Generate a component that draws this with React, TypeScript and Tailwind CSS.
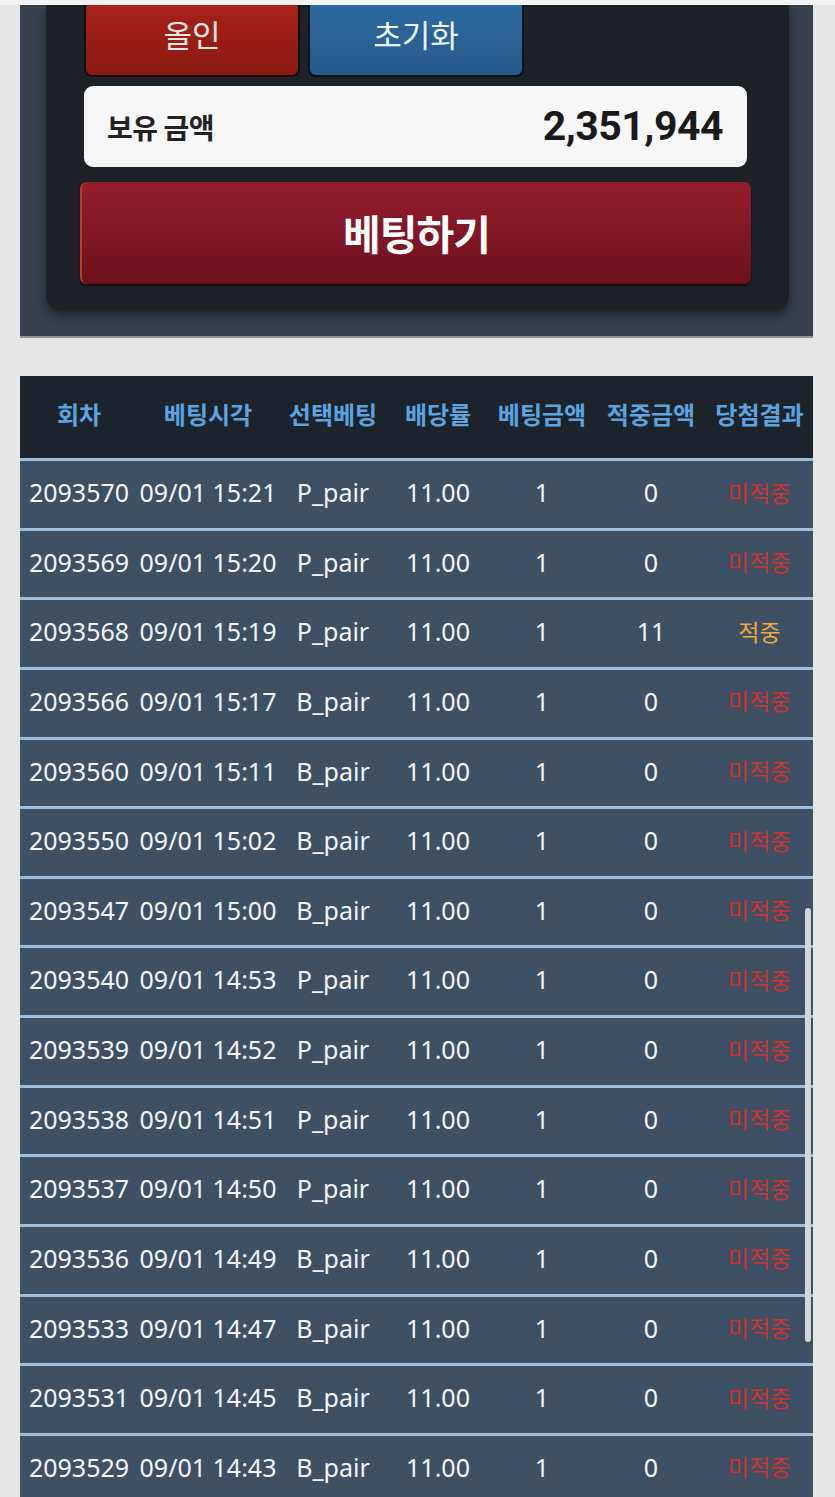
import React from "react";

type Row = {
  round: string;
  time: string;
  pick: string;
  odds: string;
  bet: string;
  win: string;
  hit: boolean;
};

const rows: Row[] = [
  { round: "2093570", time: "09/01 15:21", pick: "P_pair", odds: "11.00", bet: "1", win: "0", hit: false },
  { round: "2093569", time: "09/01 15:20", pick: "P_pair", odds: "11.00", bet: "1", win: "0", hit: false },
  { round: "2093568", time: "09/01 15:19", pick: "P_pair", odds: "11.00", bet: "1", win: "11", hit: true },
  { round: "2093566", time: "09/01 15:17", pick: "B_pair", odds: "11.00", bet: "1", win: "0", hit: false },
  { round: "2093560", time: "09/01 15:11", pick: "B_pair", odds: "11.00", bet: "1", win: "0", hit: false },
  { round: "2093550", time: "09/01 15:02", pick: "B_pair", odds: "11.00", bet: "1", win: "0", hit: false },
  { round: "2093547", time: "09/01 15:00", pick: "B_pair", odds: "11.00", bet: "1", win: "0", hit: false },
  { round: "2093540", time: "09/01 14:53", pick: "P_pair", odds: "11.00", bet: "1", win: "0", hit: false },
  { round: "2093539", time: "09/01 14:52", pick: "P_pair", odds: "11.00", bet: "1", win: "0", hit: false },
  { round: "2093538", time: "09/01 14:51", pick: "P_pair", odds: "11.00", bet: "1", win: "0", hit: false },
  { round: "2093537", time: "09/01 14:50", pick: "P_pair", odds: "11.00", bet: "1", win: "0", hit: false },
  { round: "2093536", time: "09/01 14:49", pick: "B_pair", odds: "11.00", bet: "1", win: "0", hit: false },
  { round: "2093533", time: "09/01 14:47", pick: "B_pair", odds: "11.00", bet: "1", win: "0", hit: false },
  { round: "2093531", time: "09/01 14:45", pick: "B_pair", odds: "11.00", bet: "1", win: "0", hit: false },
  { round: "2093529", time: "09/01 14:43", pick: "B_pair", odds: "11.00", bet: "1", win: "0", hit: false },
];

const headers = ["회차", "베팅시각", "선택베팅", "배당률", "베팅금액", "적중금액", "당첨결과"];

// column widths, summed to the 793px table
const cols = "grid grid-cols-[118px_140px_110px_100px_108px_110px_107px]";

const kr = "font-['Noto_Sans','Noto_Sans_CJK_KR',sans-serif]";

function BetPanel() {
  return (
    <div className="ml-[20px] w-[793px] bg-[#37414b] pl-[26px] pr-[24px] pb-[26px] border-b-2 border-[#8c949c]">
      <div className="bg-[#1e2227] rounded-b-[14px] shadow-[0_6px_10px_rgba(0,0,0,0.45)] pl-[38px] pr-[42px] pb-[26px]">
        <div className="flex gap-[8px]">
          <button className="w-[216px] h-[72px] rounded-b-[8px] border-2 border-t-0 border-[#0d0f12] bg-gradient-to-b from-[#a82218] to-[#8a1a12] text-[#f6e6e4] text-[31px] font-normal font-['Noto_Sans_CJK_KR',sans-serif] pb-[12px]">
            올인
          </button>
          <button className="w-[216px] h-[72px] rounded-b-[8px] border-2 border-t-0 border-[#0d0f12] bg-gradient-to-b from-[#2e6aa0] to-[#255a8c] text-[#eef3f8] text-[31px] font-normal font-['Noto_Sans_CJK_KR',sans-serif] pb-[12px]">
            초기화
          </button>
        </div>

        <div className="mt-[9px] h-[81px] rounded-[9px] bg-[#f7f7f8] flex items-center justify-between pl-[23px] pr-[24px] shadow-[0_0_0_1px_#18223a]">
          <span className="text-[28px] font-bold text-[#222] tracking-[-0.5px] font-['Noto_Sans_CJK_KR',sans-serif]">
            보유 금액
          </span>
          <span className="text-[41px] font-bold text-[#1a1a1a] font-['Roboto',sans-serif] tracking-[-0.5px]">
            2,351,944
          </span>
        </div>

        <button className="mt-[15px] -ml-[4px] w-[671px] h-[102px] rounded-[7px] border-l-2 border-[#c0392b] bg-gradient-to-b from-[#971d2d] to-[#6b111b] shadow-[0_2px_3px_rgba(0,0,0,0.6)] flex items-center justify-center">
          <span className="text-white text-[41px] font-bold tracking-[-1px] font-['Noto_Sans_CJK_KR',sans-serif]">
            베팅하기
          </span>
        </button>
      </div>
    </div>
  );
}

function HistoryTable() {
  return (
    <div className="ml-[20px] w-[793px] mt-[38px]">
      <div className={`${cols} h-[82px] bg-[#1c232a] items-center pb-[4px]`}>
        {headers.map((h) => (
          <div
            key={h}
            className={`text-center text-[24px] font-bold text-[#5ca4e0] ${kr}`}
          >
            {h}
          </div>
        ))}
      </div>
      {rows.map((r) => (
        <div
          key={r.round}
          className={`${cols} h-[69.64px] border-t-[3px] border-[#9dbfdd] bg-[#3e5064] items-center pb-[3px] text-[#f2f4f6] text-[25px] ${kr}`}
        >
          <div className="text-center">{r.round}</div>
          <div className="text-center">{r.time}</div>
          <div className="text-center">{r.pick}</div>
          <div className="text-center">{r.odds}</div>
          <div className="text-center">{r.bet}</div>
          <div className="text-center">{r.win}</div>
          <div
            className={`text-center text-[23px] ${
              r.hit ? "text-[#eeaa3a]" : "text-[#d3302c]"
            }`}
          >
            {r.hit ? "적중" : "미적중"}
          </div>
        </div>
      ))}
    </div>
  );
}

export default function App() {
  return (
    <div className="relative h-[1497px] overflow-hidden bg-[#e6e6e6] pt-[5px]">
      <div className="absolute top-0 left-0 right-0 h-[5px] bg-[#f3f3f3]" />
      <BetPanel />
      <HistoryTable />
      {/* overlay scrollbar */}
      <div className="absolute left-[805px] top-[908px] w-[6px] h-[434px] rounded-full bg-[#d4d6d8]" />
    </div>
  );
}
